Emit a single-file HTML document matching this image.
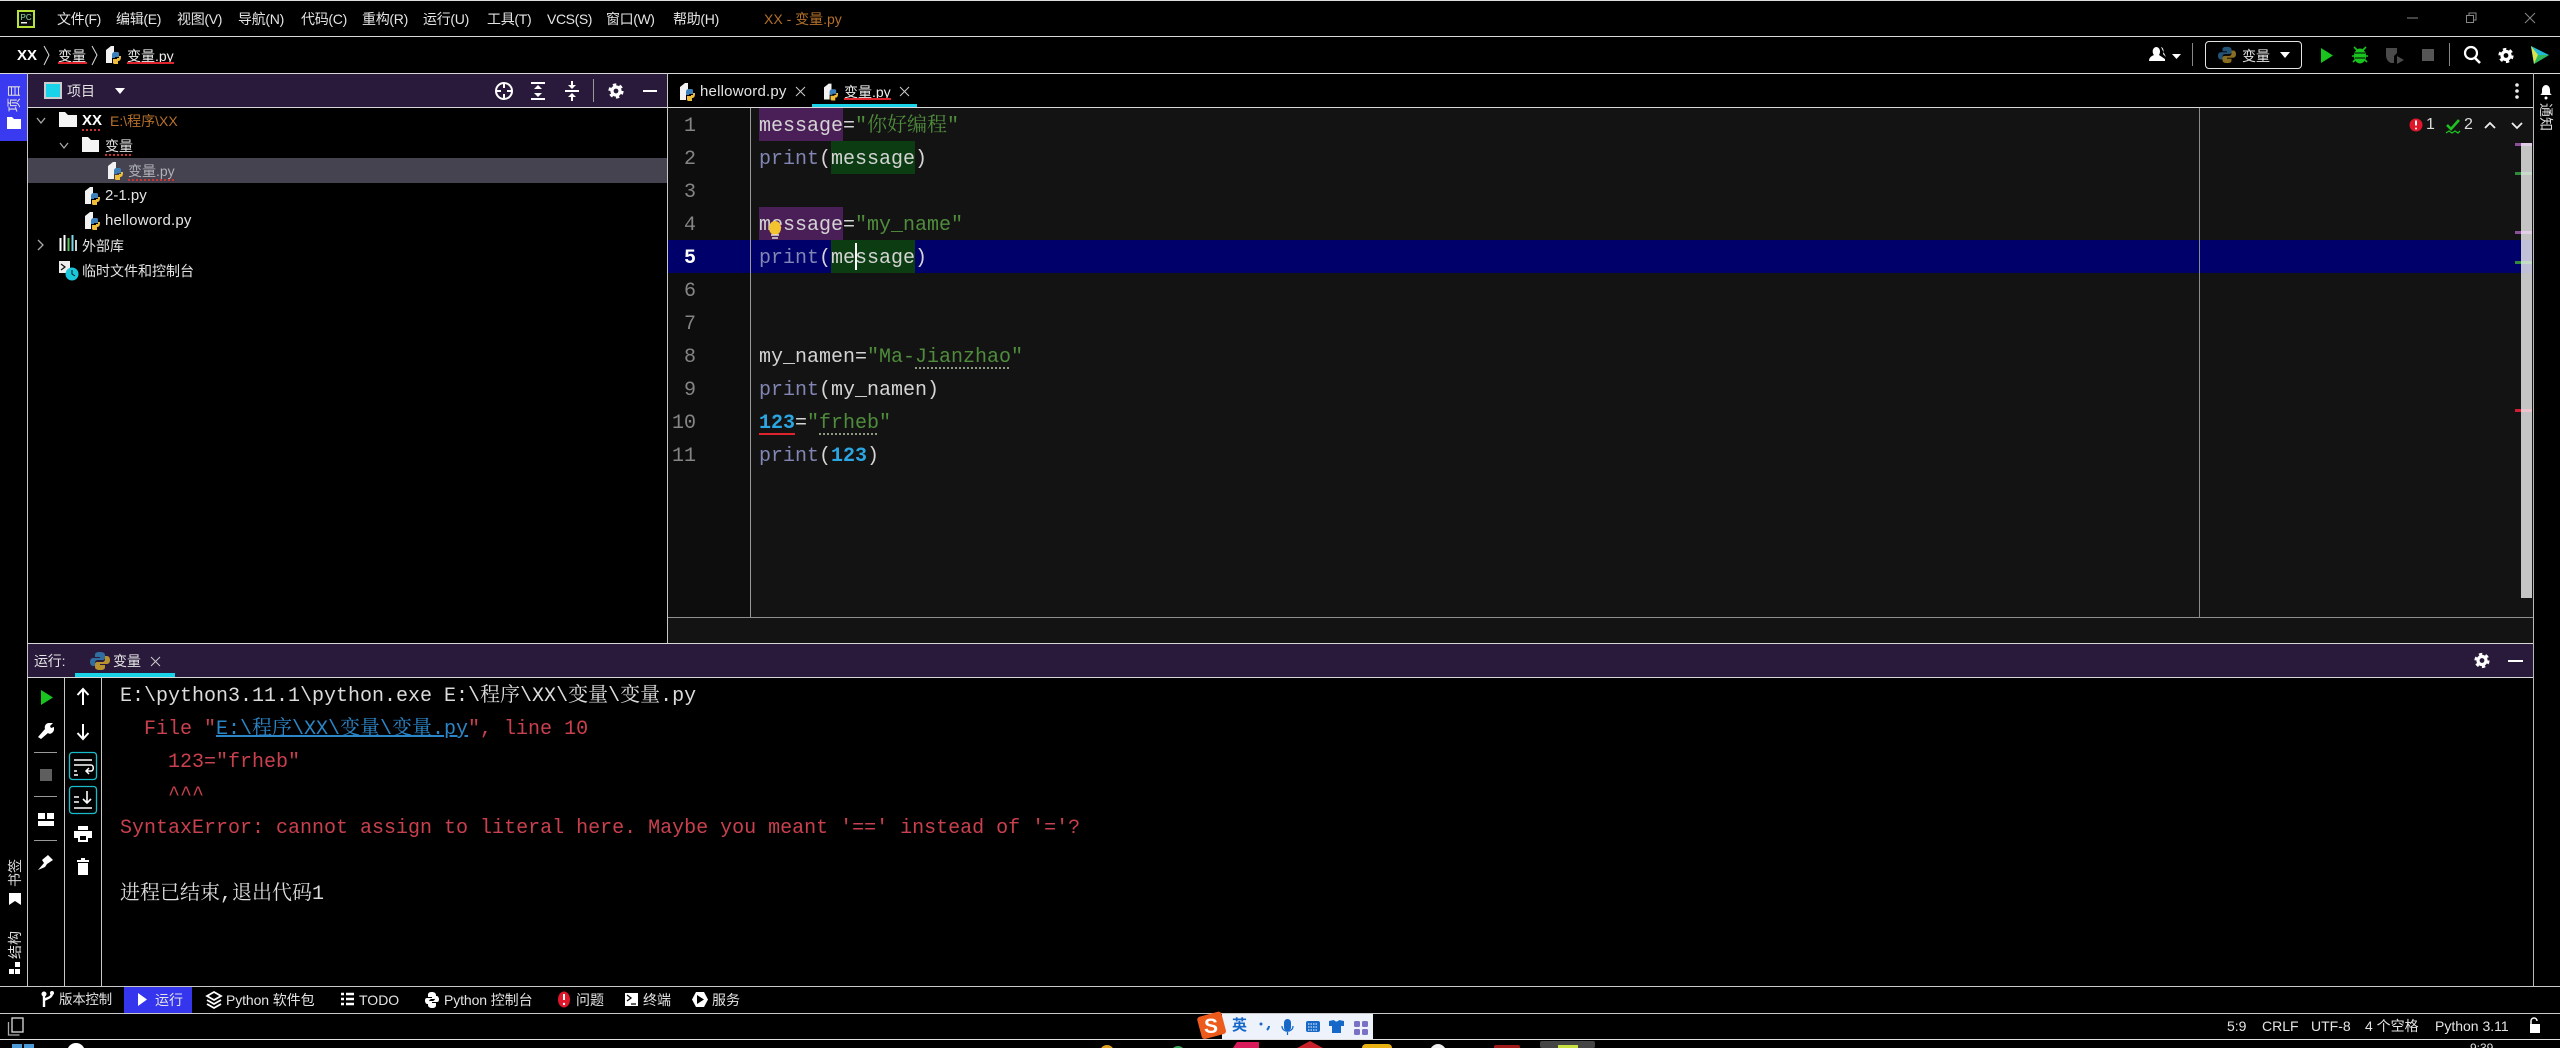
<!DOCTYPE html>
<html><head><meta charset="utf-8"><style>
html,body{margin:0;padding:0;width:2560px;height:1048px;overflow:hidden;background:#000}
body{position:relative;font-family:"Liberation Sans","Noto Sans CJK SC",sans-serif;color:#e4e4e4;font-size:14px}
.b{position:absolute}
.t{position:absolute;white-space:nowrap;line-height:20px;height:20px}
.v{position:absolute;writing-mode:vertical-rl;text-orientation:sideways;white-space:nowrap;line-height:16px;font-size:14px;color:#ddd}
.r{transform:rotate(180deg)}
.c{position:absolute;left:759px;margin-top:2px;white-space:pre;font:20px/33px "Liberation Mono","Noto Serif CJK SC",monospace;color:#d4d4d4;height:33px}
.n{position:absolute;width:40px;left:656px;margin-top:2px;text-align:right;font:20px/33px "Liberation Mono",monospace;color:#858585}
.k{color:#8286b4}.s{color:#4f8c3c}.m{color:#2ba6e2;font-weight:bold}
.o{position:absolute;left:120px;margin-top:2px;white-space:pre;font:20px/33px "Liberation Mono","Noto Serif CJK SC",monospace;color:#dcdcdc}
.e{color:#c9404e}.l{color:#2b86c8;text-decoration:underline}
.w{position:absolute;height:2px;background:repeating-linear-gradient(90deg,#c33 0 2px,transparent 2px 4px)}
.g{background:repeating-linear-gradient(90deg,#8f9a84 0 2px,transparent 2px 4px)}
svg.i{position:absolute;left:0;top:0;width:2560px;height:1048px}
</style></head><body>

<!-- backgrounds -->
<div class="b" style="left:28px;top:74px;width:639px;height:33px;background:#291a3c"></div>
<div class="b" style="left:28px;top:158px;width:639px;height:25px;background:#45434f"></div>
<div class="b" style="left:668px;top:108px;width:82px;height:509px;background:#0d0d0d"></div>
<div class="b" style="left:751px;top:108px;width:1782px;height:509px;background:#131313"></div>
<div class="b" style="left:668px;top:618px;width:1865px;height:25px;background:#131313"></div>
<div class="b" style="left:759px;top:108px;width:84px;height:33px;background:#4a1f57"></div>
<div class="b" style="left:831px;top:141px;width:84px;height:33px;background:#0c3d12"></div>
<div class="b" style="left:759px;top:207px;width:84px;height:33px;background:#4a1f57"></div>
<div class="b" style="left:668px;top:240px;width:1853px;height:33px;background:#00006b"></div>
<div class="b" style="left:831px;top:240px;width:84px;height:33px;background:#0c3d12"></div>
<div class="b" style="left:2199px;top:108px;width:1px;height:509px;background:#8a8a8a"></div>
<div class="b" style="left:750px;top:108px;width:1px;height:509px;background:#999"></div>
<div class="b" style="left:28px;top:644px;width:2505px;height:33px;background:#291a3c"></div>
<div class="b" style="left:0;top:73px;width:27px;height:68px;background:#3a3af0"></div>
<div class="b" style="left:124px;top:987px;width:68px;height:26px;background:#3535ee"></div>

<!-- lines -->
<div class="b" style="left:0;top:0;width:2560px;height:1px;background:#ddd"></div>
<div class="b" style="left:0;top:36px;width:2560px;height:1px;background:#d8d8d8"></div>
<div class="b" style="left:0;top:73px;width:2560px;height:1px;background:#d8d8d8"></div>
<div class="b" style="left:27px;top:107px;width:2506px;height:1px;background:#d8d8d8"></div>
<div class="b" style="left:27px;top:73px;width:1px;height:913px;background:#c8c8c8"></div>
<div class="b" style="left:667px;top:73px;width:1px;height:570px;background:#c8c8c8"></div>
<div class="b" style="left:2533px;top:73px;width:1px;height:913px;background:#b8b8b8"></div>
<div class="b" style="left:668px;top:617px;width:1865px;height:1px;background:#8f8f8f"></div>
<div class="b" style="left:27px;top:643px;width:2506px;height:1px;background:#d8d8d8"></div>
<div class="b" style="left:27px;top:677px;width:2506px;height:1px;background:#d8d8d8"></div>
<div class="b" style="left:64px;top:678px;width:1px;height:308px;background:#c8c8c8"></div>
<div class="b" style="left:101px;top:678px;width:1px;height:308px;background:#c8c8c8"></div>
<div class="b" style="left:0;top:986px;width:2560px;height:1px;background:#c8c8c8"></div>
<div class="b" style="left:0;top:1013px;width:2560px;height:1px;background:#c8c8c8"></div>
<div class="b" style="left:0;top:1039px;width:2560px;height:1px;background:#e0e0e0"></div>

<!-- menu -->
<div class="t" style="left:57px;top:9px;letter-spacing:-.4px">文件(F)</div>
<div class="t" style="left:116px;top:9px;letter-spacing:-.3px">编辑(E)</div>
<div class="t" style="left:177px;top:9px;letter-spacing:-.3px">视图(V)</div>
<div class="t" style="left:238px;top:9px;letter-spacing:-.3px">导航(N)</div>
<div class="t" style="left:301px;top:9px;letter-spacing:-.3px">代码(C)</div>
<div class="t" style="left:362px;top:9px;letter-spacing:-.3px">重构(R)</div>
<div class="t" style="left:423px;top:9px;letter-spacing:-.3px">运行(U)</div>
<div class="t" style="left:487px;top:9px;letter-spacing:-.3px">工具(T)</div>
<div class="t" style="left:547px;top:9px;letter-spacing:-.4px">VCS(S)</div>
<div class="t" style="left:606px;top:9px;letter-spacing:-.4px">窗口(W)</div>
<div class="t" style="left:673px;top:9px;letter-spacing:-.3px">帮助(H)</div>
<div class="t" style="left:764px;top:9px;color:#b5702a">XX - 变量.py</div>

<!-- breadcrumbs -->
<div class="t" style="left:17px;top:46px;font-weight:bold;color:#fff;font-size:15px">XX</div>
<div class="t" style="left:58px;top:46px;color:#eee;border-bottom:0">变量</div>
<div class="b" style="left:58px;top:62px;width:29px;height:2px;background:#e0242e"></div>
<div class="t" style="left:127px;top:46px;color:#eee">变量.py</div>
<div class="b" style="left:127px;top:62px;width:47px;height:2px;background:#e0242e"></div>

<!-- side strip -->
<div class="v r" style="left:6px;top:84px">项目</div>
<div class="v r" style="left:7px;top:859px">书签</div>
<div class="v r" style="left:7px;top:931px">结构</div>
<div class="v" style="left:2538px;top:103px">通知</div>

<!-- project panel -->
<div class="t" style="left:67px;top:81px">项目</div>
<div class="t" style="left:82px;top:111px;font-weight:bold;color:#fff;font-size:15px">XX</div>
<div class="t" style="left:110px;top:111px;color:#b5702a">E:\程序\XX</div>
<div class="w" style="left:82px;top:129px;width:20px"></div>
<div class="t" style="left:105px;top:136px">变量</div>
<div class="w" style="left:105px;top:154px;width:28px"></div>
<div class="t" style="left:128px;top:161px;color:#b0b0b8">变量.py</div>
<div class="w" style="left:128px;top:179px;width:47px"></div>
<div class="t" style="left:105px;top:186px;font-size:15px">2-1.py</div>
<div class="t" style="left:105px;top:211px;font-size:15px;letter-spacing:.2px">helloword.py</div>
<div class="t" style="left:82px;top:236px">外部库</div>
<div class="t" style="left:82px;top:261px">临时文件和控制台</div>

<!-- tabs -->
<div class="t" style="left:700px;top:82px;font-size:15px;letter-spacing:.2px">helloword.py</div>
<div class="t" style="left:844px;top:82px;color:#eee">变量.py</div>
<div class="b" style="left:844px;top:98px;width:47px;height:2px;background:#e0242e"></div>
<div class="b" style="left:812px;top:104px;width:105px;height:3px;background:#19d3e8"></div>

<!-- line numbers -->
<div class="n" style="top:108px">1</div><div class="n" style="top:141px">2</div><div class="n" style="top:174px">3</div>
<div class="n" style="top:207px">4</div><div class="n" style="top:240px;color:#fff;font-weight:bold">5</div><div class="n" style="top:273px">6</div>
<div class="n" style="top:306px">7</div><div class="n" style="top:339px">8</div><div class="n" style="top:372px">9</div>
<div class="n" style="top:405px">10</div><div class="n" style="top:438px">11</div>

<!-- code -->
<div class="c" style="top:108px">message=<span class="s">"你好编程"</span></div>
<div class="c" style="top:141px"><span class="k">print</span>(message)</div>
<div class="c" style="top:207px">message=<span class="s">"my_name"</span></div>
<div class="c" style="top:240px"><span class="k">print</span>(message)</div>
<div class="c" style="top:339px">my_namen=<span class="s">"Ma-Jianzhao"</span></div>
<div class="c" style="top:372px"><span class="k">print</span>(my_namen)</div>
<div class="c" style="top:405px"><span class="m">123</span>=<span class="s">"frheb"</span></div>
<div class="c" style="top:438px"><span class="k">print</span>(<span class="m">123</span>)</div>
<div class="w g" style="left:915px;top:367px;width:96px"></div>
<div class="w g" style="left:819px;top:433px;width:60px"></div>
<div class="b" style="left:759px;top:433px;width:36px;height:2px;background:#e0242e"></div>
<div class="b" style="left:855px;top:243px;width:2px;height:27px;background:#fff"></div>

<!-- inspection -->
<div class="t" style="left:2426px;top:115px;font-size:16px;color:#ddd">1</div>
<div class="t" style="left:2464px;top:115px;font-size:16px;color:#ddd">2</div>

<!-- scrollbar -->
<div class="b" style="left:2521px;top:144px;width:11px;height:454px;background:#c4c4c4"></div>
<div class="b" style="left:2521px;top:240px;width:11px;height:33px;background:#c0c0d8"></div>
<div class="b" style="left:2515px;top:143px;width:6px;height:3px;background:#8c4f98"></div>
<div class="b" style="left:2521px;top:143px;width:11px;height:3px;background:#e0cfe4"></div>
<div class="b" style="left:2515px;top:172px;width:6px;height:3px;background:#2f8a3c"></div>
<div class="b" style="left:2521px;top:172px;width:11px;height:3px;background:#c8dccb"></div>
<div class="b" style="left:2515px;top:231px;width:6px;height:3px;background:#8c4f98"></div>
<div class="b" style="left:2521px;top:231px;width:11px;height:3px;background:#e4cfe8"></div>
<div class="b" style="left:2515px;top:261px;width:6px;height:3px;background:#2f8a3c"></div>
<div class="b" style="left:2521px;top:261px;width:11px;height:3px;background:#c4dcc8"></div>
<div class="b" style="left:2515px;top:409px;width:6px;height:3px;background:#d01c34"></div>
<div class="b" style="left:2521px;top:409px;width:11px;height:3px;background:#eec4cc"></div>

<!-- run header -->
<div class="t" style="left:34px;top:651px;letter-spacing:-.2px">运行:</div>
<div class="t" style="left:113px;top:651px">变量</div>
<div class="b" style="left:75px;top:673px;width:100px;height:4px;background:#19d3e8"></div>

<!-- console -->
<div class="o" style="top:678px">E:\python3.11.1\python.exe E:\程序\XX\变量\变量.py</div>
<div class="o e" style="top:711px">  File "<span class="l">E:\程序\XX\变量\变量.py</span>", line 10</div>
<div class="o e" style="top:744px">    123="frheb"</div>
<div class="o e" style="top:777px">    ^^^</div>
<div class="o e" style="top:810px">SyntaxError: cannot assign to literal here. Maybe you meant '==' instead of '='?</div>
<div class="o" style="top:876px">进程已结束,退出代码1</div>

<!-- bottom tool buttons -->
<div class="t" style="left:59px;top:990px;font-size:13.5px;letter-spacing:-.3px">版本控制</div>
<div class="t" style="left:155px;top:990px">运行</div>
<div class="t" style="left:226px;top:990px;letter-spacing:-.1px">Python 软件包</div>
<div class="t" style="left:359px;top:990px">TODO</div>
<div class="t" style="left:444px;top:990px;letter-spacing:-.1px">Python 控制台</div>
<div class="t" style="left:576px;top:990px">问题</div>
<div class="t" style="left:643px;top:990px">终端</div>
<div class="t" style="left:712px;top:990px">服务</div>

<!-- status -->
<div class="t" style="left:2227px;top:1016px">5:9</div>
<div class="t" style="left:2262px;top:1016px">CRLF</div>
<div class="t" style="left:2311px;top:1016px">UTF-8</div>
<div class="t" style="left:2365px;top:1016px">4 个空格</div>
<div class="t" style="left:2435px;top:1016px">Python 3.11</div>

<!-- run config -->
<div class="b" style="left:2205px;top:41px;width:95px;height:26px;border:1px solid #e4e4e4;border-radius:4px"></div>
<div class="t" style="left:2242px;top:46px">变量</div>

<!-- IME -->
<div class="b" style="left:1222px;top:1014px;width:151px;height:25px;background:#eef3fb"></div>
<div class="t" style="left:1232px;top:1016px;color:#1668c8;font-weight:bold;font-size:15px">英</div>

<svg class="i" viewBox="0 0 2560 1048" xmlns="http://www.w3.org/2000/svg">
<defs>
<symbol id="pf" viewBox="0 0 16 18">
<path d="M0 4 5 0h3v9l-2 3v5H0z" fill="#f2f2f2"/>
<path d="M6 9c0-2 1-3 3-3h2c2 0 2 1 2 2v3H9v1H6z" fill="#3d7fb8"/>
<path d="M15 10c0 4-1 5-3 5v3H9c-2 0-2-1-2-2v-3h4v-1h2v-2z" fill="#f0bd3a"/>
</symbol>
<symbol id="py" viewBox="0 0 20 20">
<path d="M10 1C6 1 5 2 5 4v2h5v1H3C1 7 0 9 0 11s1 4 3 4h2v-3c0-2 1-3 3-3h5c1 0 2-1 2-2V4c0-2-2-3-5-3z" fill="#2f6e9f"/>
<path d="M10 19c4 0 5-1 5-3v-2h-5v-1h7c2 0 3-2 3-4s-1-4-3-4h-2v3c0 2-1 3-3 3H7c-1 0-2 1-2 2v3c0 2 2 3 5 3z" fill="#b7922e"/>
</symbol>
<symbol id="gear" viewBox="0 0 20 20">
<circle cx="10" cy="10" r="5" fill="none" stroke="#fff" stroke-width="4"/>
<circle cx="10" cy="10" r="8" fill="none" stroke="#fff" stroke-width="3" stroke-dasharray="4.2 4.2"/>
</symbol>
</defs>

<!-- logo -->
<rect x="17" y="10" width="18" height="18" fill="#b7e23a"/><rect x="19" y="12" width="14" height="14" fill="#0a0a0a"/>
<text x="20.500" y="20" font-size="8" font-family="Liberation Sans" fill="#8fe0a0">PC</text><rect x="21" y="22" width="6" height="1.500" fill="#eee"/>
<!-- chevrons breadcrumb -->
<path d="M44 46l5 9-5 10M92 46l5 9-5 10" fill="none" stroke="#ddd" stroke-width="1"/>
<use href="#pf" x="106" y="46" width="16" height="18"/>
<!-- win controls -->
<path d="M2407 18h11" stroke="#888" stroke-width="1"/>
<path d="M2466.500 15.500h7v7h-7zM2469 15.500v-2.500h7v7h-2.500" fill="none" stroke="#888" stroke-width="1"/>
<path d="M2525 13l10 10M2535 13l-10 10" stroke="#888" stroke-width="1"/>
<!-- user -->
<path d="M2149 61c0-4 3-5 5-6-2-2-2-7 2-8 4 0 5 5 3 8l6 4v2zM2161 47c3 1 3 5 2 7l3 3" fill="#fff"/>
<path d="M2172 54h9l-4.500 5z" fill="#fff"/>
<path d="M2192.500 43v23M2449.500 43v23" stroke="#888"/>
<use href="#py" x="2218" y="46" width="18" height="18" opacity=".75"/>
<path d="M2280 52h10l-5 6z" fill="#fff"/>
<path d="M2321 48v15l12-7.500z" fill="#19c41f"/>
<!-- bug -->
<ellipse cx="2360" cy="56" rx="6" ry="7.500" fill="#19c41f"/><path d="M2354 47l3 3M2366 47l-3 3M2352 56h2M2366 56h2M2353 62l2-2M2367 62l-2-2" stroke="#19c41f" stroke-width="1.600"/><path d="M2355 53h10M2355 58h10" stroke="#000" stroke-width="1"/>
<!-- coverage -->
<path d="M2386 48h11v5l-3 3v7h-3c-3-1-5-4-5-8z" fill="#4b4b4b"/><path d="M2397 56v8l7-4z" fill="#4b4b4b"/>
<rect x="2422" y="49" width="12" height="12" fill="#565656"/>
<!-- search -->
<circle cx="2471" cy="53" r="6" fill="none" stroke="#fff" stroke-width="2.200"/><path d="M2475 58l5 5" stroke="#fff" stroke-width="2.600"/>
<use href="#gear" x="2498" y="47" width="16" height="17"/>
<!-- plugin logo -->
<path d="M2531 46l18 9-15 9z" fill="#22b9d8"/><path d="M2531 46l7 9-4 9z" fill="#d8e44a"/><path d="M2538 55l11 0-15 9z" fill="#2fb85a"/>
<!-- tab kebab -->
<circle cx="2517" cy="85" r="1.800" fill="#eee"/><circle cx="2517" cy="91" r="1.800" fill="#eee"/><circle cx="2517" cy="97" r="1.800" fill="#eee"/>
<!-- bell -->
<path d="M2540 95c2-1 2-2 2-5s2-5 4-5 4 2 4 5 0 4 2 5z" fill="#fff"/><circle cx="2546" cy="98" r="1.500" fill="#fff"/>

<!-- left strip icons -->
<path d="M7 117h5l2 2h7v10H7z" fill="#fff"/>
<path d="M9 893h12v12l-6-4-6 4z" fill="#fff"/>
<path d="M9 969h5v5H9zM15 969h5v5h-5zM15 962h5v5h-5z" fill="#fff"/>

<!-- project header icons -->
<rect x="45" y="83" width="16" height="15" fill="#19d3e8" stroke="#ccc" stroke-width="2"/>
<path d="M115 88h10l-5 6z" fill="#fff"/>
<circle cx="504" cy="91" r="8" fill="none" stroke="#fff" stroke-width="2"/><path d="M504 83v5M504 94v5M496 91h5M507 91h5" stroke="#fff" stroke-width="2"/>
<path d="M531 83h14M531 99h14" stroke="#fff" stroke-width="2"/><path d="M538 85l-4 4h8zM538 97l-4-4h8z" fill="#fff"/>
<path d="M565 91h14" stroke="#fff" stroke-width="2"/><path d="M572 89l-4-4h8zM572 93l-4 4h8z" fill="#fff"/><path d="M572 81v4M572 97v4" stroke="#fff" stroke-width="2"/>
<path d="M593.500 79v23" stroke="#999"/>
<use href="#gear" x="608" y="82" width="16" height="18"/>
<path d="M643 91h14" stroke="#fff" stroke-width="2"/>

<!-- tree -->
<path d="M37 118l4 5 4-5M60 143l4 5 4-5" fill="none" stroke="#aaa" stroke-width="1.300"/>
<path d="M38 240l5 5-5 5" fill="none" stroke="#aaa" stroke-width="1.300"/>
<path d="M59 112h6l3 3h9v12H59z" fill="#f4f4f4"/>
<path d="M82 137h6l3 3h8v12H82z" fill="#f4f4f4"/>
<use href="#pf" x="108" y="162" width="16" height="18"/>
<use href="#pf" x="85" y="187" width="16" height="18"/>
<use href="#pf" x="85" y="212" width="16" height="18"/>
<path d="M60.500 238v13M64.500 235v16" stroke="#fff" stroke-width="2"/><path d="M68.500 238v13" stroke="#57c45a" stroke-width="2"/><path d="M72.500 235v16" stroke="#7fd4e8" stroke-width="2"/><path d="M76 240v11" stroke="#d0d0d0" stroke-width="2"/>
<path d="M59 261h11v12H59z" fill="#eee"/><path d="M61 264l4 3-4 3" fill="none" stroke="#111" stroke-width="1.200"/>
<circle cx="72" cy="274" r="6.500" fill="#19c6dc"/><path d="M72 270v4l3 2" fill="none" stroke="#111"/>

<!-- tabs icons -->
<use href="#pf" x="680" y="83" width="16" height="18"/>
<use href="#pf" x="824" y="83" width="15" height="18"/>
<path d="M796 87l9 9M805 87l-9 9M900 87l9 9M909 87l-9 9" stroke="#ccc" stroke-width="1"/>

<!-- lightbulb -->
<ellipse cx="775" cy="228" rx="6" ry="7" fill="#f4c430"/><path d="M771 235h8M772 238h6" stroke="#ddd" stroke-width="1.500"/>

<!-- inspections -->
<circle cx="2416" cy="125" r="6.500" fill="#e0162b"/><path d="M2416 120.500v5" stroke="#fff" stroke-width="2"/><circle cx="2416" cy="128.500" r="1" fill="#fff"/>
<path d="M2447 125l4 4 8-9" fill="none" stroke="#1fc21f" stroke-width="2.600"/><path d="M2446 133l3-2 3 2 3-2 3 2 2-2" fill="none" stroke="#1fc21f" stroke-width="1.300"/>
<path d="M2485 128l5-5 5 5M2512 123l5 5 5-5" fill="none" stroke="#eee" stroke-width="1.800"/>

<!-- run header icons -->
<use href="#py" x="90" y="651" width="20" height="20"/>
<path d="M151 657l9 9M160 657l-9 9" stroke="#ccc" stroke-width="1"/>
<use href="#gear" x="2474" y="652" width="16" height="17"/>
<path d="M2508 661h15" stroke="#fff" stroke-width="2"/>

<!-- run left icons -->
<path d="M41 690v15l12-7.500z" fill="#19c41f"/>
<path d="M38 737l7-8c-1-3 1-6 4-6l4 0-3 3 1 2 3-1 0 3c-1 3-4 5-6 3l-7 6z" fill="#fff"/>
<path d="M34 752.500h23M34 796.500h23M34 840.500h23" stroke="#999"/>
<rect x="40" y="769" width="12" height="12" fill="#5e5e5e"/>
<path d="M38 813h7v6h-7zM47 813h7v6h-7zM38 821h16v5H38z" fill="#fff"/>
<path d="M38 870l6-7-2-3 6-5 5 5-6 4-2 3z" fill="#fff"/>
<path d="M83 690v15M77.500 695l5.500-6 5.500 6" fill="none" stroke="#fff" stroke-width="2"/>
<path d="M83 724v15M77.500 733l5.500 6 5.500-6" fill="none" stroke="#fff" stroke-width="2"/>
<rect x="69.500" y="752.500" width="27" height="27" rx="3" fill="none" stroke="#19bccc" stroke-width="1.300"/>
<path d="M74 760h18M74 765h17c3 0 3 6 0 6h-5M89 768l-3 3 3 3M74 771h3M74 775h4" fill="none" stroke="#fff" stroke-width="1.500"/>
<rect x="69.500" y="786.500" width="27" height="27" rx="3" fill="none" stroke="#19bccc" stroke-width="1.300"/>
<path d="M74 808h18M74 797h5M74 802h5M87 791v12M83 799l4 4 4-4" fill="none" stroke="#fff" stroke-width="1.600"/>
<path d="M78 826h10v4H78zM74 831h18v7h-4v4H78v-4h-4z" fill="#fff"/><rect x="80" y="836" width="6" height="4" fill="#000"/>
<path d="M77 860h12v2H77zM81 858h4v2h-4zM78 863h10v12H78z" fill="#fff"/>

<!-- bottom buttons icons -->
<circle cx="44" cy="994" r="2.500" fill="#fff"/><circle cx="52" cy="993" r="2" fill="#fff"/><path d="M44 994v13M52 993c0 5-5 5-8 7" fill="none" stroke="#fff" stroke-width="2.400"/>
<path d="M138 993v13l9-6.500z" fill="#fff"/>
<path d="M207 996l7-4 7 4-7 4zM207 1000l7 4 7-4M207 1004l7 4 7-4" fill="none" stroke="#fff" stroke-width="1.800"/>
<path d="M341 994h3M341 999h3M341 1004h3M346 994h8M346 999h8M346 1004h8" stroke="#fff" stroke-width="2.400"/>
<path d="M432 992c-3 0-4 1-4 3v2h4v1h-5c-2 0-2 2-2 3s1 3 2 3h2v-2c0-2 1-3 3-3h2c1 0 2-1 2-2v-2c0-2-2-3-4-3zM432 1008c3 0 4-1 4-3v-2h-4v-1h5c2 0 2-2 2-3s-1-3-2-3h-2v2c0 2-1 3-3 3h-2c-1 0-2 1-2 2v2c0 2 2 3 4 3z" fill="#fff"/>
<ellipse cx="564" cy="999.500" rx="6" ry="8" fill="#e0162b"/><path d="M564 994v6" stroke="#fff" stroke-width="2"/><circle cx="564" cy="1004" r="1.200" fill="#fff"/>
<rect x="625" y="993" width="13" height="13" fill="#fff"/><path d="M627 995l4 3-4 3M631 1004h5" fill="none" stroke="#000" stroke-width="1.300"/>
<path d="M696 992h8l4 7.500-4 7.500h-8l-4-7.500z" fill="#fff"/><path d="M697 995v9l7-4.500z" fill="#000"/>

<!-- status icons -->
<rect x="12" y="1018" width="11" height="14" fill="none" stroke="#ddd" stroke-width="1.300"/><path d="M8.500 1022v13h11" fill="none" stroke="#aaa" stroke-width="1.300"/>
<rect x="2530" y="1024" width="10" height="9" fill="#fff"/><path d="M2531 1024v-3c0-4 6-4 6 0" fill="none" stroke="#fff" stroke-width="1.500"/>

<!-- IME icons -->
<rect x="1199" y="1014" width="25" height="23" rx="3" fill="#ec5a1c" transform="rotate(-15 1211 1025)"/>
<text x="1204" y="1033" font-size="21" font-weight="bold" font-family="Liberation Sans" fill="#fff">S</text>
<circle cx="1261" cy="1024" r="1.500" fill="#1668c8"/><path d="M1269 1026c0 2-1 3-2 4" stroke="#1668c8" stroke-width="2" fill="none"/>
<rect x="1284" y="1019" width="7" height="12" rx="3.500" fill="#1668c8"/><path d="M1282 1026c0 7 11 7 11 0M1287.500 1032v3" fill="none" stroke="#1668c8" stroke-width="1.300"/>
<rect x="1306" y="1021" width="14" height="11" rx="2" fill="#1668c8"/><path d="M1308 1024h10M1308 1027h10M1308 1030h10" stroke="#fff" stroke-dasharray="1.500 1"/>
<path d="M1329 1021l5-1c1 2 4 2 5 0l5 1 0 5-3 0v7h-9v-7l-3 0z" fill="#1668c8"/>
<rect x="1354" y="1021" width="6" height="6" rx="1.500" fill="#7a70c4"/><rect x="1362" y="1021" width="6" height="6" rx="1.500" fill="#7a70c4"/><rect x="1354" y="1029" width="6" height="6" rx="1.500" fill="#7a70c4"/><rect x="1362" y="1029" width="6" height="6" rx="1.500" fill="#7a70c4"/>

<!-- taskbar slivers -->
<path d="M12 1044h10v4H12zM24 1044h10v4H24z" fill="#4a9ad8"/>
<circle cx="76" cy="1052" r="9" fill="#fff"/>
<circle cx="1107" cy="1052" r="7" fill="#e0a020"/>
<circle cx="1178" cy="1053" r="7" fill="#3aa85a"/>
<path d="M1233 1048l4-6h22v6z" fill="#d81a5a"/>
<path d="M1297 1048l13-7 13 7z" fill="#c8202a"/>
<rect x="1362" y="1044" width="30" height="8" rx="4" fill="#e8b010"/>
<circle cx="1438" cy="1052" r="8" fill="#eee"/>
<rect x="1494" y="1045" width="26" height="5" rx="2" fill="#a01818"/>
<rect x="1540" y="1041" width="55" height="7" rx="2" fill="#444"/>
<rect x="1558" y="1045" width="20" height="3" fill="#c8e040"/>
</svg>
<div class="t" style="left:2470px;top:1041px;font-size:12px;line-height:14px;height:7px;overflow:hidden;color:#ddd">9:39</div>
</body></html>
